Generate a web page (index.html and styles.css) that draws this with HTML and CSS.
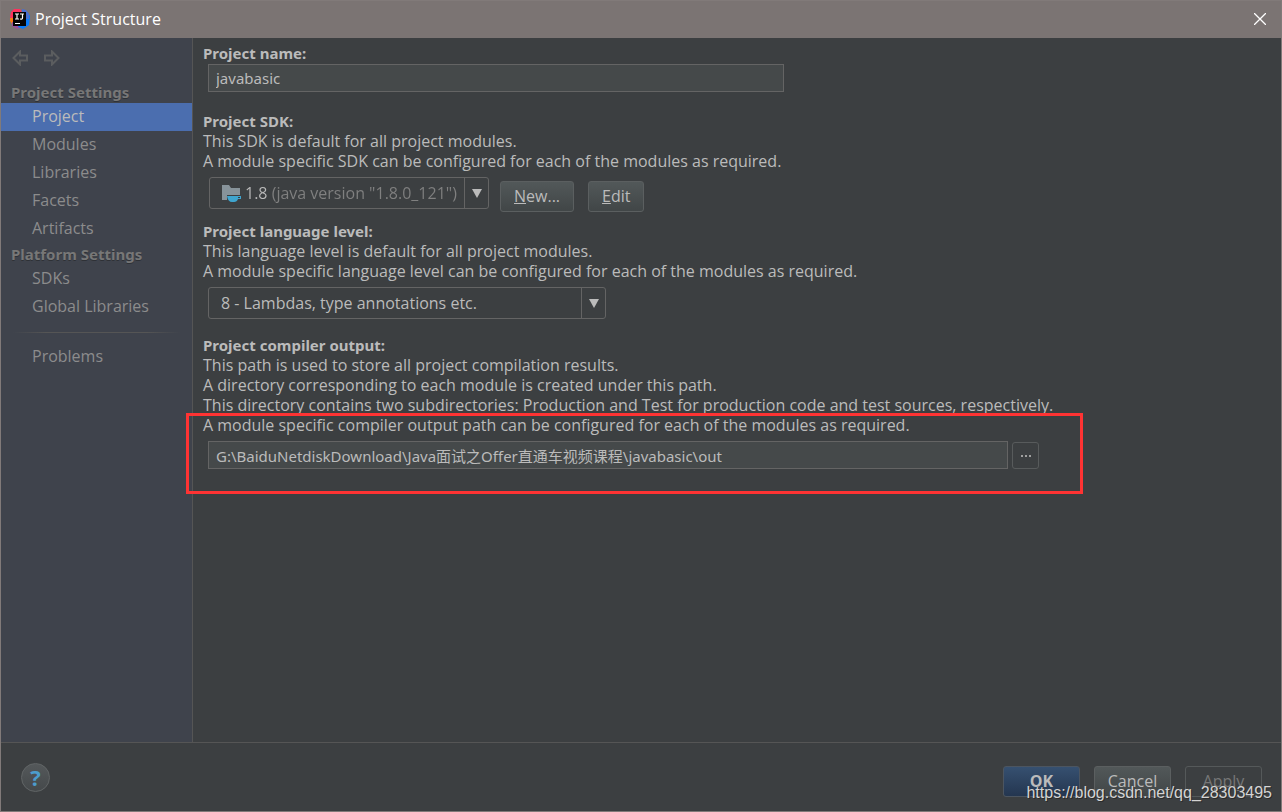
FILE: index.html
```html
<!DOCTYPE html>
<html lang="en">
<head>
<meta charset="utf-8">
<title>Project Structure</title>
<link rel="stylesheet" href="styles.css">
</head>
<body>
<div class="window">
  <header class="titlebar">
    <svg class="logo" viewBox="0 0 20 20" aria-hidden="true">
      <path d="M1 3 4 0h6l3 5-4 6H3L0 8Z" fill="#fe315d"/>
      <path d="M0 9h6v6H2L0 12Z" fill="#f97a12"/>
      <path d="m2 13 8 1v5l-3 1-5-3Z" fill="#9b4f9c"/>
      <path d="m12 4 5-1 3 4-1 9-6 4-5-2Z" fill="#087cfa"/>
      <path d="m12 0 4 1 3 4v5h-7Z" fill="#4a6fd0"/>
      <rect x="3" y="3" width="13" height="14" fill="#050505"/>
      <path d="M5 5h4M7 5v5M5 10h4M10 5h4M12.500 5v4q0 1.500-2.500 1M5 14.500h5" fill="none" stroke="#fff" stroke-width="1.200"/>
    </svg>
    <h1 class="title">Project Structure</h1>
    <button class="close" aria-label="Close">
      <svg viewBox="0 0 12 12" aria-hidden="true"><path d="m0 0 12 12M12 0 0 12" fill="none" stroke="#fff" stroke-width="1.300"/></svg>
    </button>
  </header>
  <div class="body">
    <nav class="sidebar">
      <div class="history">
        <button aria-label="Back"><svg viewBox="0 0 16 16" aria-hidden="true"><path d="M1.500 8 8 1.500V5.500h7v5H8V14.500Z"/></svg></button>
        <button aria-label="Forward"><svg viewBox="0 0 16 16" aria-hidden="true"><path d="M14.500 8 8 1.500V5.500H1v5h7V14.500Z"/></svg></button>
      </div>
      <h2 class="group">Project Settings</h2>
      <a class="item selected" href="#project">Project</a>
      <a class="item" href="#modules">Modules</a>
      <a class="item" href="#libraries">Libraries</a>
      <a class="item" href="#facets">Facets</a>
      <a class="item" href="#artifacts">Artifacts</a>
      <h2 class="group">Platform Settings</h2>
      <a class="item" href="#sdks">SDKs</a>
      <a class="item" href="#global">Global Libraries</a>
      <hr class="rule">
      <a class="item" href="#problems">Problems</a>
    </nav>
    <main class="content" id="project">
      <section>
        <label class="heading" for="name">Project name:</label>
        <div class="row name-row"><input class="field name" id="name" value="javabasic"></div>
      </section>
      <section>
        <label class="heading" for="sdk">Project SDK:</label>
        <p>This SDK is default for all project modules.</p>
        <p>A module specific SDK can be configured for each of the modules as required.</p>
        <div class="row sdk-row">
          <div class="combo sdk">
            <svg class="folder" viewBox="0 0 20 20" aria-hidden="true">
              <path d="M1 2h7l2 3h9v7H6v5H1Z" fill="#87939a"/>
              <path d="M6 13h14v3h-3q-1 3-4 3h-2q-4 0-5-6Z" fill="#3fa5cf"/>
              <path d="M17 14h2v1h-2Z" fill="#3c3f41"/>
            </svg>
            <select id="sdk"><option>1.8 (java version "1.8.0_121")</option></select>
            <span class="arrow"><svg viewBox="0 0 10 9" aria-hidden="true"><path d="M0 0h10L5 9Z"/></svg></span>
          </div>
          <button class="button"><u>N</u>ew...</button>
          <button class="button"><u>E</u>dit</button>
        </div>
      </section>
      <section>
        <label class="heading" for="level">Project language level:</label>
        <p>This language level is default for all project modules.</p>
        <p>A module specific language level can be configured for each of the modules as required.</p>
        <div class="row">
          <div class="combo level">
            <select id="level"><option>8 - Lambdas, type annotations etc.</option></select>
            <span class="arrow"><svg viewBox="0 0 10 9" aria-hidden="true"><path d="M0 0h10L5 9Z"/></svg></span>
          </div>
        </div>
      </section>
      <section class="output">
        <label class="heading" for="out">Project compiler output:</label>
        <p>This path is used to store all project compilation results.</p>
        <p>A directory corresponding to each module is created under this path.</p>
        <p>This directory contains two subdirectories: Production and Test for production code and test sources, respectively.</p>
        <p>A module specific compiler output path can be configured for each of the modules as required.</p>
        <div class="row path-row">
          <input class="field path" id="out" value="G:\BaiduNetdiskDownload\Java面试之Offer直通车视频课程\javabasic\out">
          <button class="browse" aria-label="Browse"><svg viewBox="0 0 10 2" aria-hidden="true"><path d="M0 0h2v2H0ZM4 0h2v2H4ZM8 0h2v2H8Z"/></svg></button>
        </div>
        <div class="highlight"></div>
      </section>
    </main>
  </div>
  <footer class="footer">
    <button class="help" aria-label="Help">?</button>
    <div class="actions">
      <button class="button primary">OK</button>
      <button class="button">Cancel</button>
      <button class="button" disabled>Apply</button>
    </div>
    <span class="watermark">https://blog.csdn.net/qq_28303495</span>
  </footer>
</div>
</body>
</html>
```
FILE: styles.css
```css
* { box-sizing: border-box; }
body {
  margin: 0;
  color: #bbbbbb;
  font: 16px/20px "Open Sans", "Noto Sans CJK SC", sans-serif;
}
h1, h2, p { margin: 0; }
button, input, select { font: inherit; color: inherit; margin: 0; }
button { padding: 0; border: 0; background: none; }
svg { display: block; }
.window {
  display: flex;
  flex-direction: column;
  min-height: 100vh;
  border: 1px solid #817a79;
  background: #3c3f41;
}
.titlebar {
  display: flex;
  align-items: center;
  gap: 5px;
  height: 37px;
  padding: 0 15px 1px 9px;
  background: #7b7473;
  color: #fff;
}
.logo { width: 20px; height: 20px; }
.title { flex: 1; font-size: 16px; font-weight: 400; }
.close svg { width: 12px; height: 12px; }
.body { display: flex; flex: 1; }
.sidebar {
  flex: 0 0 192px;
  border-right: 1px solid #555555;
  background: #3f434c;
  color: #8c8c8c;
}
.history { display: flex; gap: 16px; padding: 12px 11px 15px; }
.history svg {
  width: 16px;
  height: 16px;
  fill: none;
  stroke: #5b5d5f;
  stroke-width: 2;
}
.group {
  padding-left: 10px;
  font-size: 15px;
  line-height: 22px;
  color: #777777;
  text-shadow: 0 1px #2e3136;
}
.group, .heading, .field { font-family: "Noto Sans", "Noto Sans CJK SC", sans-serif; }
.item {
  display: block;
  height: 28px;
  padding-left: 31px;
  line-height: 26px;
  color: inherit;
  text-decoration: none;
}
.selected { background: #4b6eaf; color: #bbbbbb; }
.rule {
  height: 1px;
  margin: 11px 12px 10px;
  border: 0;
  background: linear-gradient(to right, transparent, #555555 20%, #555555 80%, transparent);
}
.content {
  display: flex;
  flex: 1;
  flex-direction: column;
  min-width: 0;
  padding: 5px 10px;
}
.heading { display: block; font-size: 15px; font-weight: 700; }
.row { display: flex; padding: 6px 0 16px 5px; }
.name-row { padding: 1px 0 19px 5px; }
.sdk-row { gap: 14px; padding: 6px 0 9px 6px; }
.sdk-row .sdk { margin-right: -3px; }
.sdk-row .button { margin-top: 4px; }
.field {
  height: 28px;
  padding: 0 7px;
  border: 1px solid #646464;
  border-radius: 0;
  background: #45494a;
  font-size: 15px;
  outline: 0;
}
.name { width: 576px; }
.path { width: 800px; }
.combo {
  display: flex;
  align-items: center;
  height: 32px;
  border: 1px solid #646464;
  border-radius: 3px;
}
.combo select {
  flex: 1;
  min-width: 0;
  height: 30px;
  padding: 0;
  border: 0;
  background: transparent;
  appearance: none;
  outline: 0;
}
.sdk { width: 280px; padding-left: 11px; }
.folder { width: 20px; height: 20px; margin-right: 4px; }
.combo.sdk select {
  background: linear-gradient(to right, #bbbbbb 24px, #808080 24px);
  background-clip: text;
  -webkit-text-fill-color: transparent;
}
.level { width: 398px; padding-left: 12px; }
.arrow {
  display: grid;
  place-items: center;
  width: 24px;
  height: 30px;
  border-left: 1px solid #646464;
}
.arrow svg { width: 10px; height: 9px; fill: #bbbbbb; }
.button {
  height: 31px;
  padding: 0 13px 2px;
  border: 1px solid #5b5f60;
  border-radius: 3px;
  background: linear-gradient(#525859, #414647);
}
.output { position: relative; }
.path-row { gap: 4px; }
.browse {
  display: grid;
  place-items: center;
  width: 27px;
  height: 27px;
  margin-top: 1px;
  border: 1px solid #585b5c;
  border-radius: 3px;
}
.browse svg { width: 10px; height: 2px; fill: #a0a0a0; }
.highlight {
  position: absolute;
  left: -17px;
  top: 78px;
  width: 897px;
  height: 81px;
  border: 3px solid #ff3333;
  pointer-events: none;
}
.footer {
  position: relative;
  display: flex;
  align-items: center;
  justify-content: space-between;
  height: 69px;
  padding: 9px 19px 0 20px;
  border-top: 1px solid #555555;
}
.help {
  width: 29px;
  height: 29px;
  margin-top: -8px;
  border: 1px solid #616566;
  border-radius: 50%;
  background: linear-gradient(#54585a, #45494b);
  color: #4c9ccc;
  font-size: 22px;
  font-weight: 700;
  line-height: 27px;
}
.actions { display: flex; gap: 14px; }
.actions .button { width: 77px; padding: 0 0 2px; }
.actions .primary {
  border-color: #4c5560;
  background: linear-gradient(#365070, #243650);
  font-weight: 700;
}
.actions .button:disabled { background: none; color: #777777; border-color: #55595a; }
.watermark {
  position: absolute;
  right: 9px;
  bottom: 8px;
  color: #d4d4d4;
  font: 16px/20px "Liberation Sans", sans-serif;
  text-shadow: 1px 1px #2b2b2b;
}
```
